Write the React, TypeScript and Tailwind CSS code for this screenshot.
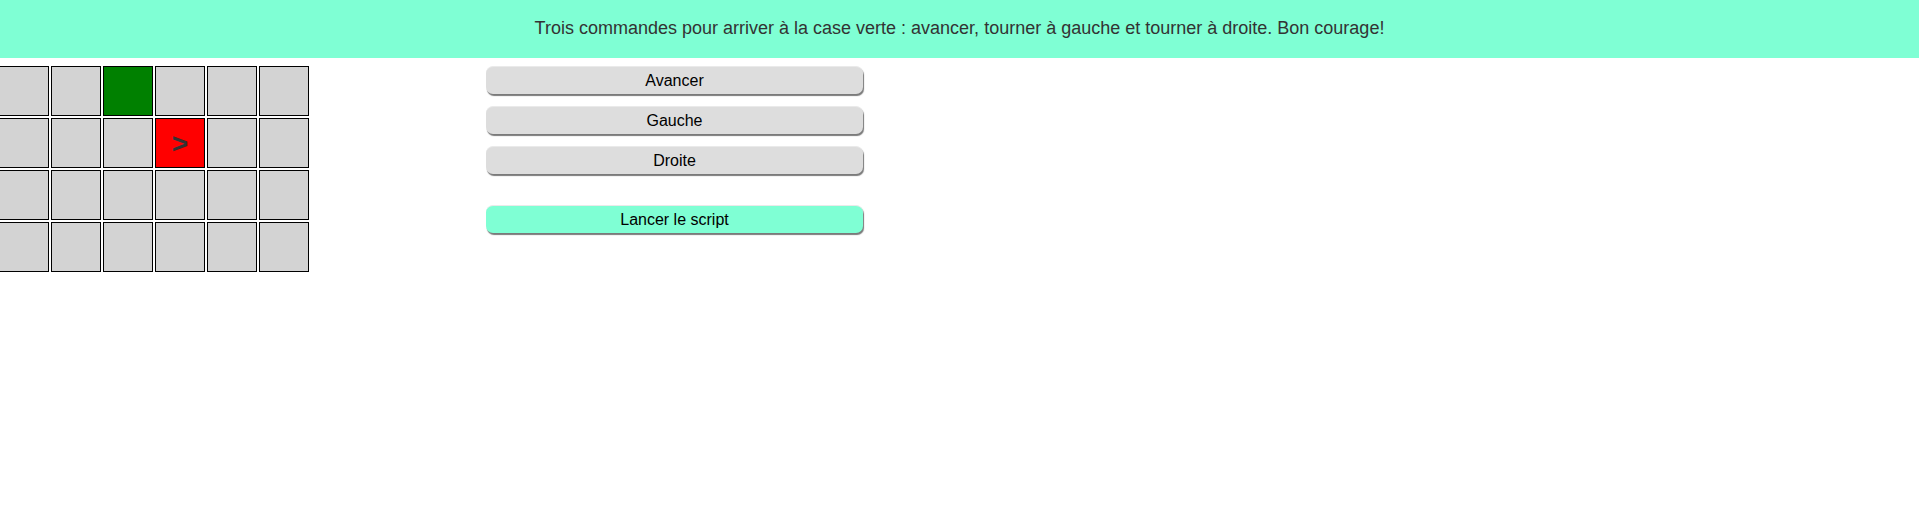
const ROWS = 4;
const COLS = 6;
const GOAL = { r: 0, c: 2 };
const ROBOT = { r: 1, c: 3 };

function Cell({ r, c }: { r: number; c: number }) {
    const isGoal = r === GOAL.r && c === GOAL.c;
    const isRobot = r === ROBOT.r && c === ROBOT.c;
    const bg = isGoal ? "bg-[#008000]" : isRobot ? "bg-[#ff0000]" : "bg-[#d3d3d3]";
    return (
        <div
            className={`w-[50px] h-[50px] border border-black flex items-center justify-center ${bg}`}
        >
            {isRobot && (
                <span className="text-[28px] font-bold leading-none text-[#333] pt-[1px]">
                    &gt;
                </span>
            )}
        </div>
    );
}

function CommandButton({
    label,
    highlight = false,
}: {
    label: string;
    highlight?: boolean;
}) {
    return (
        <button
            className={`w-[377px] h-[28px] rounded-[7px] text-[16px] text-black leading-none shadow-[1px_2px_1px_#7a7a7a] border-t border-[#eaeaea] ${
                highlight ? "bg-[#7fffd4]" : "bg-[#dddddd]"
            }`}
        >
            {label}
        </button>
    );
}

export default function App() {
    return (
        <div className="w-[1919px] h-[523px] bg-white overflow-hidden font-['Liberation_Sans',Arial,sans-serif]">
            {/* Consigne */}
            <header className="h-[58px] bg-[#7fffd4] flex items-center justify-center">
                <p className="text-[18px] text-[#333] pb-[1px]">
                    Trois commandes pour arriver à la case verte : avancer,
                    tourner à gauche et tourner à droite. Bon courage!
                </p>
            </header>

            <div className="flex pt-[8px]">
                {/* Plateau */}
                <div className="ml-[-1px] w-[487px] grid grid-cols-[repeat(6,50px)] gap-[2px] content-start">
                    {Array.from({ length: ROWS }).map((_, r) =>
                        Array.from({ length: COLS }).map((_, c) => (
                            <Cell key={`${r}-${c}`} r={r} c={c} />
                        ))
                    )}
                </div>

                {/* Commandes */}
                <div className="flex flex-col gap-[12px]">
                    <CommandButton label="Avancer" />
                    <CommandButton label="Gauche" />
                    <CommandButton label="Droite" />
                    <div className="mt-[19px]">
                        <CommandButton label="Lancer le script" highlight />
                    </div>
                </div>
            </div>
        </div>
    );
}
